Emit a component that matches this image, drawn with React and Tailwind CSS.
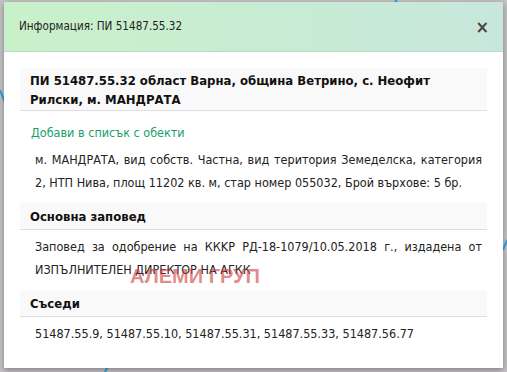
import React from "react";

export default function App() {
  const font = { fontFamily: '"DejaVu Sans Condensed", "DejaVu Sans", sans-serif' };
  return (
    <div className="relative w-[507px] h-[372px] overflow-hidden bg-[#b7bcc6]" style={font}>
      <svg className="absolute inset-0" width="507" height="372" viewBox="0 0 507 372">
        <rect x="0" y="0" width="507" height="372" fill="#c4c2c4" />
        <path d="M0 90 L12 120" stroke="#29a3e0" strokeWidth="2" fill="none" />
        <path d="M395 0 L398 3" stroke="#29a3e0" strokeWidth="2" fill="none" />
        <path d="M105 372 L108 366" stroke="#29a3e0" strokeWidth="2" fill="none" />
        <path d="M503 250 L507 240" stroke="#29a3e0" strokeWidth="2" fill="none" />
      </svg>
      <div className="absolute left-[4px] top-[2px] w-[499px] h-[366px] bg-white shadow-[0_2px_6px_rgba(0,0,0,0.35)] flex flex-col">
        <div className="h-[50px] shrink-0 flex items-center justify-between pl-[15px] pr-[14px] border-b border-[#bcd8c8] bg-gradient-to-r from-[#c9f1c9] to-[#c7e7dc]">
          <span className="text-[11.6px] text-[#222]">Информация: ПИ 51487.55.32</span>
          <span className="text-[18px] font-bold text-[#444] leading-none">×</span>
        </div>
        <div className="px-[16px] pt-[16px] flex flex-col">
          <div className="bg-[#f9f9f9] border-b border-[#dedede] px-[10px] pt-[3px] pb-[1px] text-[13px] font-bold leading-[19px] text-[#111]">
            ПИ 51487.55.32 област Варна, община Ветрино, с. Неофит Рилски, м. МАНДРАТА
          </div>
          <div className="pl-[11px] pt-[10px] text-[12.5px] leading-[23px] text-[#17a06b]">Добави в списък с обекти</div>
          <p className="pl-[15px] pr-[5px] pt-[4px] text-[12.5px] leading-[23px] text-[#222] text-justify">
            м. МАНДРАТА, вид собств. Частна, вид територия Земеделска, категория 2, НТП Нива, площ 11202 кв. м, стар номер 055032, Брой върхове: 5 бр.
          </p>
          <div className="mt-[9px] bg-[#f9f9f9] border-b border-[#dedede] px-[10px] pt-[4px] pb-[3px] text-[13px] font-bold leading-[19px] text-[#111]">
            Основна заповед
          </div>
          <div className="relative">
            <p className="pl-[15px] pr-[5px] pt-[5px] text-[12.5px] leading-[23px] text-[#222] text-justify">
              Заповед за одобрение на ККKР РД-18-1079/10.05.2018 г., издадена от ИЗПЪЛНИТЕЛЕН ДИРЕКТОР НА АГКК
            </p>
            <span className="absolute left-[110px] top-[36px] text-[20px] font-bold leading-none text-[rgba(205,60,60,0.6)]" style={{ fontFamily: '"Liberation Sans", Arial, sans-serif' }}>
              АЛЕМИ ГРУП
            </span>
          </div>
          <div className="mt-[10px] bg-[#f9f9f9] border-b border-[#dedede] px-[10px] pt-[3px] pb-[3px] text-[13px] font-bold leading-[19px] text-[#111]">
            Съседи
          </div>
          <p className="pl-[15px] pt-[5px] text-[12.5px] leading-[23px] text-[#222]">
            51487.55.9, 51487.55.10, 51487.55.31, 51487.55.33, 51487.56.77
          </p>
        </div>
      </div>
    </div>
  );
}
